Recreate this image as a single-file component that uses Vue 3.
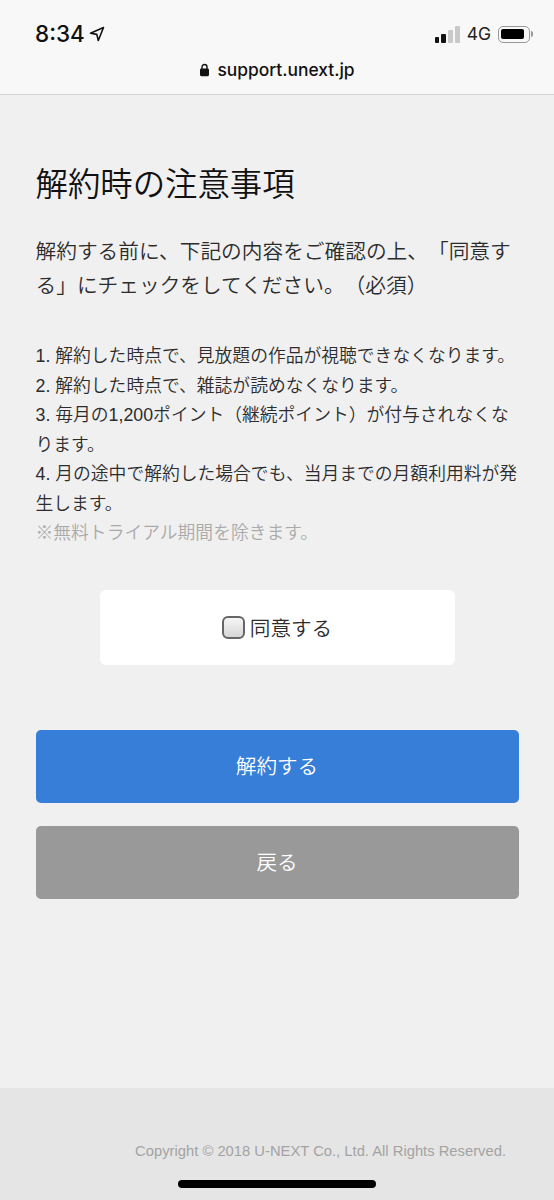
<script setup>
const items = [
  '1. 解約した時点で、見放題の作品が視聴できなくなります。',
  '2. 解約した時点で、雑誌が読めなくなります。',
  '3. 毎月の1,200ポイント（継続ポイント）が付与されなくなります。',
  '4. 月の途中で解約した場合でも、当月までの月額利用料が発生します。'
]
</script>

<template>
  <div class="page">
    <header class="chrome">
      <div class="status">
        <div class="time-wrap">
          <span class="time">8:34</span>
          <svg class="loc" width="16" height="16" viewBox="0 0 16 16">
            <path d="M14.5 1.5 1.5 7.2 7.8 8.4 9.3 14.5Z" fill="none" stroke="#111" stroke-width="1.6" stroke-linejoin="round" />
          </svg>
        </div>
        <div class="indicators">
          <span class="signal">
            <i class="b1"></i><i class="b2"></i><i class="b3"></i><i class="b4"></i>
          </span>
          <span class="net">4G</span>
          <span class="battery"><span class="fill"></span></span>
          <span class="nub"></span>
        </div>
      </div>
      <div class="url">
        <svg width="11" height="14" viewBox="0 0 11 14">
          <path d="M3 6V4a2.5 2.5 0 0 1 5 0v2" fill="none" stroke="#111" stroke-width="1.4" />
          <rect x="1" y="5.6" width="9" height="7.6" rx="1.4" fill="#111" />
        </svg>
        <span>support.unext.jp</span>
      </div>
    </header>

    <main class="content">
      <h1>解約時の注意事項</h1>
      <p class="lead">解約する前に、下記の内容をご確認の上、「同意する」にチェックをしてください。（必須）</p>
      <div class="notes">
        <p v-for="item in items" :key="item">{{ item }}</p>
        <p class="muted">※無料トライアル期間を除きます。</p>
      </div>
      <label class="agree">
        <span class="box"></span>
        <span>同意する</span>
      </label>
      <button class="btn primary">解約する</button>
      <button class="btn secondary">戻る</button>
    </main>

    <footer class="foot">
      <span class="copy">Copyright © 2018 U-NEXT Co., Ltd. All Rights Reserved.</span>
      <span class="home"></span>
    </footer>
  </div>
</template>

<style>
body { margin: 0; background: #f0f0f0; }
</style>

<style scoped>
.page {
  width: 554px;
  height: 1200px;
  display: flex;
  flex-direction: column;
  overflow: hidden;
  background: #f0f0f0;
  font-family: "Liberation Sans", "Noto Sans CJK JP", sans-serif;
  font-weight: 350;
  text-spacing-trim: space-all;
  color: #2c2c2c;
}
.chrome {
  height: 95px;
  box-sizing: border-box;
  background: #f8f8f8;
  border-bottom: 1px solid #d4d4d4;
  flex: none;
}
.status {
  display: flex;
  justify-content: space-between;
  align-items: center;
  height: 50px;
  padding: 18px 21px 0 35px;
  box-sizing: border-box;
}
.time-wrap { display: flex; align-items: center; gap: 4px; }
.time {
  font: 500 22.5px/30px Inter, "Liberation Sans", sans-serif;
  color: #111;
}
.loc { margin-top: -1px; }
.indicators { display: flex; align-items: center; }
.signal { display: flex; align-items: flex-end; gap: 2px; height: 17px; margin-right: 7px; }
.signal i { display: block; width: 4.75px; border-radius: 1px; }
.b1 { height: 6px; background: #111; }
.b2 { height: 9px; background: #111; }
.b3 { height: 13px; background: #c9c9c9; }
.b4 { height: 17px; background: #c9c9c9; }
.net { font: 400 17.5px/20px Inter, "Liberation Sans", sans-serif; color: #222; margin-right: 7px; }
.battery {
  display: block;
  width: 32px;
  height: 17px;
  box-sizing: border-box;
  border: 1.5px solid #999;
  border-radius: 5px;
  padding: 2px;
}
.fill { display: block; width: 23px; height: 10px; background: #000; border-radius: 2px; }
.nub { width: 2px; height: 6px; background: #999; border-radius: 0 2px 2px 0; margin-left: 1px; }
.url {
  display: flex;
  align-items: center;
  justify-content: center;
  gap: 7px;
  height: 40px;
  font: 500 17.4px/20px Inter, "Liberation Sans", sans-serif;
  color: #111;
}
.content {
  flex: 1;
  padding: 0 35.5px;
  display: flex;
  flex-direction: column;
}
h1 {
  margin: 67px 0 0;
  font-size: 32.4px;
  line-height: 46px;
  font-weight: 350;
  color: #111;
}
.lead {
  margin: 27px 0 0;
  font-size: 20.7px;
  line-height: 33.5px;
}
.notes { margin-top: 40px; font-size: 17.8px; line-height: 29.5px; }
.notes p { margin: 0; }
.notes .muted { color: #aaa; }
.agree {
  align-self: center;
  width: 355px;
  height: 75px;
  margin-top: 41px;
  background: #fff;
  border-radius: 6px;
  display: flex;
  align-items: center;
  justify-content: center;
  gap: 5px;
  font-size: 20.6px;
}
.box {
  width: 23px;
  height: 23px;
  box-sizing: border-box;
  border: 2px solid #666;
  border-radius: 6px;
  background: linear-gradient(#f6f6f6, #d6d6d6);
}
.btn {
  display: block;
  width: 100%;
  height: 73.5px;
  border: 0;
  border-radius: 5px;
  color: #fff;
  font-family: inherit;
  font-weight: 350;
  font-size: 20.6px;
  padding-bottom: 3px;
}
.primary { background: #367ed8; margin-top: 65px; }
.secondary { background: #999; margin-top: 22.5px; }
.foot {
  flex: none;
  height: 112px;
  background: #e5e5e5;
  position: relative;
  box-sizing: border-box;
  display: flex;
  justify-content: flex-end;
  padding: 52px 48px 0 0;
}
.copy {
  font: 400 14.78px/22px "Liberation Sans", sans-serif;
  color: #a3a3a3;
}
.home {
  position: absolute;
  left: 178px;
  top: 92px;
  width: 198px;
  height: 8px;
  background: #000;
  border-radius: 4px;
}
</style>
